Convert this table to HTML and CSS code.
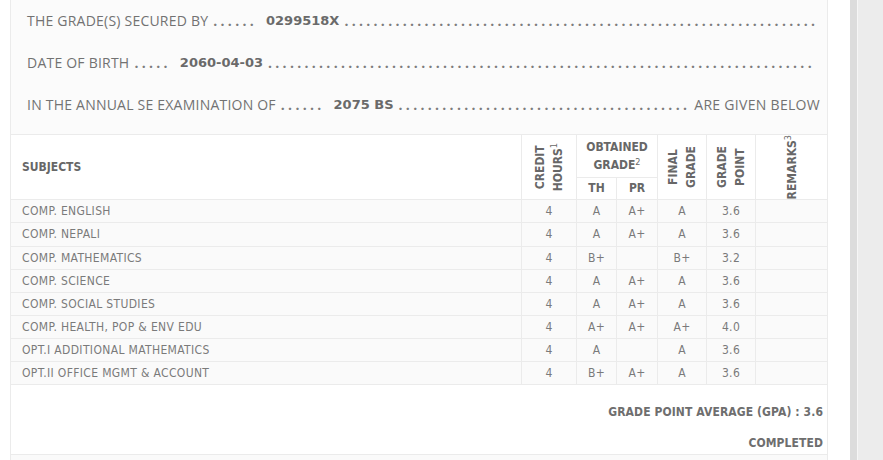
FILE: index.html
```html
<!DOCTYPE html>
<html lang="en">
<head>
<meta charset="utf-8">
<title>Grade Sheet</title>
<link rel="stylesheet" href="styles.css">
</head>
<body>
<div class="page">
  <main class="main">
    <div class="sheet">
      <section class="info">
        <div class="line">
          <span class="lbl">THE GRADE(S) SECURED BY</span><span class="dots">......</span><b class="val">0299518X</b><span class="fill">.................................................................</span>
        </div>
        <div class="line">
          <span class="lbl">DATE OF BIRTH</span><span class="dots">.....</span><b class="val">2060-04-03</b><span class="fill">...........................................................................</span>
        </div>
        <div class="line">
          <span class="lbl">IN THE ANNUAL SE EXAMINATION OF</span><span class="dots">......</span><b class="val">2075 BS</b><span class="fill">........................................</span><span class="tail">ARE GIVEN BELOW</span>
        </div>
      </section>

      <table class="grades">
        <colgroup>
          <col class="c-sub"><col class="c-cr"><col class="c-th"><col class="c-pr"><col class="c-fg"><col class="c-gp"><col class="c-rm">
        </colgroup>
        <thead>
          <tr class="hr1">
            <th rowspan="2" class="subj">SUBJECTS</th>
            <th rowspan="2"><div class="rot">CREDIT<br>HOURS<sup>1</sup></div></th>
            <th colspan="2" class="obt">OBTAINED<br>GRADE<sup>2</sup></th>
            <th rowspan="2"><div class="rot">FINAL<br>GRADE</div></th>
            <th rowspan="2"><div class="rot">GRADE<br>POINT</div></th>
            <th rowspan="2" class="last"><div class="rot">REMARKS<sup>3</sup></div></th>
          </tr>
          <tr class="hr2">
            <th>TH</th>
            <th>PR</th>
          </tr>
        </thead>
        <tbody>
          <tr><td class="subj">COMP. ENGLISH</td><td class="cr">4</td><td>A</td><td>A+</td><td>A</td><td>3.6</td><td class="last"></td></tr>
          <tr><td class="subj">COMP. NEPALI</td><td class="cr">4</td><td>A</td><td>A+</td><td>A</td><td>3.6</td><td class="last"></td></tr>
          <tr><td class="subj">COMP. MATHEMATICS</td><td class="cr">4</td><td>B+</td><td></td><td>B+</td><td>3.2</td><td class="last"></td></tr>
          <tr><td class="subj">COMP. SCIENCE</td><td class="cr">4</td><td>A</td><td>A+</td><td>A</td><td>3.6</td><td class="last"></td></tr>
          <tr><td class="subj">COMP. SOCIAL STUDIES</td><td class="cr">4</td><td>A</td><td>A+</td><td>A</td><td>3.6</td><td class="last"></td></tr>
          <tr><td class="subj">COMP. HEALTH, POP &amp; ENV EDU</td><td class="cr">4</td><td>A+</td><td>A+</td><td>A+</td><td>4.0</td><td class="last"></td></tr>
          <tr><td class="subj">OPT.I ADDITIONAL MATHEMATICS</td><td class="cr">4</td><td>A</td><td></td><td>A</td><td>3.6</td><td class="last"></td></tr>
          <tr><td class="subj">OPT.II OFFICE MGMT &amp; ACCOUNT</td><td class="cr">4</td><td>B+</td><td>A+</td><td>A</td><td>3.6</td><td class="last"></td></tr>
        </tbody>
      </table>

      <div class="summary">
        <p>GRADE POINT AVERAGE (GPA) : 3.6</p>
        <p>COMPLETED</p>
      </div>
      <div class="after"></div>
    </div>
  </main>
  <div class="rail"></div>
  <div class="panel"></div>
</div>
</body>
</html>
```

FILE: styles.css
```css
html, body {
  margin: 0;
  padding: 0;
  background: #ffffff;
}

.page {
  display: flex;
  height: 460px;
  overflow: hidden;
}

.main {
  width: 850px;
  flex: none;
  padding-left: 10px;
  box-sizing: border-box;
}

.sheet {
  width: 818px;
  height: 100%;
  box-sizing: border-box;
  border-left: 1px solid #ebebeb;
  border-right: 1px solid #ebebeb;
  display: flex;
  flex-direction: column;
}

/* ---------- top info ---------- */
.info {
  background: #fbfbfb;
  padding: 0 7px 8px 16px;
  border-bottom: 1px solid #ebebeb;
  font-family: "Open Sans", "Liberation Sans", sans-serif;
  font-size: 14px;
  line-height: 42px;
  color: #727272;
}

.line {
  display: flex;
  white-space: nowrap;
}

.lbl {
  flex: none;
  letter-spacing: 0.22px;
}

.dots,
.fill {
  flex: none;
  font-weight: bold;
  letter-spacing: 3.3px;
  color: #7d7d7d;
}

.dots {
  margin: 0 9px 0 5px;
}

.val {
  flex: none;
  font-family: "DejaVu Sans", sans-serif;
  font-weight: bold;
  font-size: 13px;
  color: #6a6a6a;
}

.fill {
  margin-left: 5px;
}

.tail {
  flex: none;
  margin-left: auto;
  letter-spacing: 0.3px;
}

/* ---------- table ---------- */
.grades {
  width: 816px;
  table-layout: fixed;
  border-collapse: separate;
  border-spacing: 0;
  font-family: "DejaVu Sans Condensed", "DejaVu Sans", sans-serif;
  font-stretch: condensed;
  font-size: 12px;
  color: #7a7a7a;
}

.c-sub { width: 511px; }
.c-cr { width: 55px; }
.c-th { width: 40px; }
.c-pr { width: 41px; }
.c-fg { width: 49px; }
.c-gp { width: 49px; }
.c-rm { width: 71px; }

.grades th,
.grades td {
  box-sizing: border-box;
  border-right: 1px solid #ebebeb;
  border-bottom: 1px solid #ebebeb;
  padding: 0;
  text-align: center;
  vertical-align: middle;
}

.grades .last {
  border-right: none;
}

.grades th {
  background: #ffffff;
  font-weight: bold;
  color: #676767;
  line-height: 18px;
}

.grades .hr1 th {
  height: 43px;
}

.grades .hr2 th {
  height: 22px;
  line-height: 21px;
}

.grades th.subj,
.grades td.subj {
  text-align: left;
  padding-left: 11px;
}

.grades td {
  background: #fafafa;
  height: 23px;
  line-height: 22px;
  letter-spacing: 0.35px;
}

.rot {
  writing-mode: vertical-rl;
  transform: rotate(180deg);
  margin: 0 auto;
  width: max-content;
  white-space: nowrap;
  text-align: center;
  line-height: 18px;
}

.grades sup {
  font-size: 9px;
  font-weight: normal;
  line-height: 0;
  vertical-align: 4px;
}

/* ---------- summary ---------- */
.summary {
  padding: 20px 4px 3px 0;
  text-align: right;
  font-family: "DejaVu Sans Condensed", "DejaVu Sans", sans-serif;
  font-stretch: condensed;
  font-weight: bold;
  font-size: 12px;
  letter-spacing: 0.1px;
  color: #6e6e6e;
}

.summary p {
  margin: 0;
  line-height: 16px;
}

.summary p + p {
  margin-top: 15px;
}

.after {
  flex: 1;
  background: #fafafa;
  border-top: 1px solid #ebebeb;
}

/* ---------- right rail ---------- */
.rail {
  width: 7px;
  flex: none;
  background: #dcdcdc;
}

.panel {
  flex: 1;
  background: #ececec;
  border-left: 1px solid #f6f6f6;
}
```
